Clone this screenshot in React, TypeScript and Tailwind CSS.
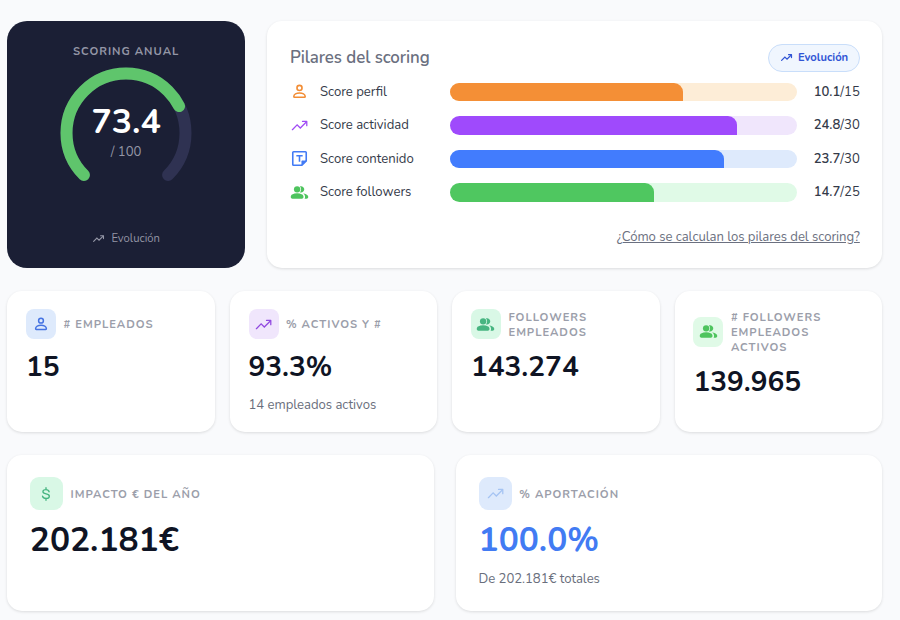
import React from 'react';
import clsx from 'clsx';

interface IconProps {
  className?: string;
}

const PersonIcon: React.FC<IconProps> = ({ className }) => (
  <svg viewBox="0 0 24 24" fill="none" stroke="currentColor" strokeWidth="2" className={className}>
    <circle cx="12" cy="7.500" r="3.200" />
    <path d="M4.800 18.400c0-2.900 3.500-4.600 7.200-4.600s7.200 1.700 7.200 4.600q0 .9-.9.900H5.700q-.9 0-.9-.9z" strokeLinejoin="round" />
  </svg>
);

const TrendIcon: React.FC<IconProps & { strokeWidth?: number }> = ({ className, strokeWidth = 1.6 }) => (
  <svg viewBox="0 0 24 24" fill="none" stroke="currentColor" strokeWidth={strokeWidth} className={className}>
    <path d="M3 17.300l6-6.100 4 4 7.600-7.700" strokeLinecap="round" />
    <path d="M15.800 6.800h5.400v5.400" strokeLinecap="round" strokeLinejoin="round" />
  </svg>
);

const NoteIcon: React.FC<IconProps> = ({ className }) => (
  <svg viewBox="0 0 24 24" fill="none" stroke="currentColor" strokeWidth="2" className={className}>
    <path d="M4.500 3.500h15a1 1 0 0 1 1 1V15l-5.500 5.500H4.500a1 1 0 0 1-1-1v-15a1 1 0 0 1 1-1z" strokeLinejoin="round" />
    <path d="M20.500 15H15v5.500z" fill="currentColor" strokeWidth="1" />
    <path d="M8 8.600h8M12 8.600V16" />
  </svg>
);

const GroupIcon: React.FC<IconProps> = ({ className }) => (
  <svg viewBox="0 0 24 24" fill="currentColor" className={className}>
    <circle cx="9" cy="8" r="4" />
    <path d="M1 17.200q0-.85.440-1.560t1.160-1.090Q5.700 13 9 13t6.400 1.550q.72.380 1.160 1.090T17 17.200V18q0 .82-.59 1.410T15 20H3q-.82 0-1.410-.59T1 18z" />
    <path d="M12.500 11.900Q14 10.200 14 8t-1.500-3.900Q13.200 4 13.900 4q1.700.2 2.900 1.300T18 8t-1.200 2.800-2.800 1.200q-.8 0-1.500-.1z" />
    <path d="M16.600 13.150q2.400.3 4.200 1.300Q23 15.500 23 17v1q0 .82-.59 1.410T21 20h-2.600q.6-.9.600-2v-1q0-2.400-2.400-3.850z" />
  </svg>
);

const DollarIcon: React.FC<IconProps> = ({ className }) => (
  <svg viewBox="0 0 24 24" fill="none" stroke="currentColor" strokeWidth="2" strokeLinecap="round" className={className}>
    <path d="M12 2.500v3M12 18.500v3M16.700 8.600C16.200 6.700 14.500 5.500 12 5.500c-2.700 0-4.600 1.200-4.600 3.200 0 4.600 9.600 1.900 9.600 6.500 0 2.100-2 3.400-4.900 3.400-2.700 0-4.700-1.200-5.300-3.300" />
  </svg>
);

const pillars = [
  { label: 'Score perfil', value: 10.1, max: 15, Icon: PersonIcon, color: 'text-[#f28d35]', fill: 'bg-[#f48f36]', track: 'bg-[#fdedd7]' },
  { label: 'Score actividad', value: 24.8, max: 30, Icon: TrendIcon, color: 'text-[#a04bf5]', fill: 'bg-[#9f4afc]', track: 'bg-[#f0e6fc]' },
  { label: 'Score contenido', value: 23.7, max: 30, Icon: NoteIcon, color: 'text-[#427bf5]', fill: 'bg-[#427cfd]', track: 'bg-[#deeafc]' },
  { label: 'Score followers', value: 14.7, max: 25, Icon: GroupIcon, color: 'text-[#4ec45e]', fill: 'bg-[#4fc760]', track: 'bg-[#e0fae7]' },
];

const ScoreGauge: React.FC = () => (
  <div className="grid h-[132px] w-[132px] place-items-center">
    <svg viewBox="0 0 132 132" fill="none" strokeWidth="12" strokeLinecap="round" className="col-start-1 row-start-1 h-[132px] w-[132px]">
      <path d="M23.930 108.070A59.500 59.500 0 1 1 108.070 108.070" stroke="#2f3252" />
      <path d="M23.930 108.070A59.500 59.500 0 1 1 108.070 108.070" stroke="#5fc56c" pathLength={100} strokeDasharray="73.4 200" />
    </svg>
    <div className="col-start-1 row-start-1 flex flex-col items-center pb-[1px]">
      <span className="text-[33.75px] font-bold leading-[39px] text-white">73.4</span>
      <span className="text-[13.125px] leading-[20px] text-[#9496a6]">/ 100</span>
    </div>
  </div>
);

interface StatProps {
  label: string;
  value: string;
  note?: string;
  icon: React.ReactNode;
  iconClass: string;
}

const StatCard: React.FC<StatProps> = ({ label, value, note, icon, iconClass }) => (
  <div className="rounded-[15px] bg-white px-[18.75px] pt-[18px] shadow-[0_1px_3px_rgba(0,0,0,0.12)]">
    <div className="flex min-h-[31px] items-center gap-[7.500px]">
      <div className={clsx('flex h-[30px] w-[30px] shrink-0 items-center justify-center rounded-[8px]', iconClass)}>
        {icon}
      </div>
      <span className="pt-[1px] text-[11.25px] font-bold uppercase leading-[15px] tracking-[0.97px] text-[#9b9eaa]">{label}</span>
    </div>
    <div className="mt-[9.500px] text-[28px] font-bold leading-[36px] text-[#0f1424]">{value}</div>
    {note && <div className="mt-[9.500px] text-[13.125px] leading-[20px] tracking-[-0.03px] text-[#696e7c]">{note}</div>}
  </div>
);

const WideCard: React.FC<StatProps & { valueClass: string }> = ({ label, value, note, icon, iconClass, valueClass }) => (
  <div className="rounded-[15px] bg-white px-[22.500px] pt-[22.300px] shadow-[0_1px_3px_rgba(0,0,0,0.12)]">
    <div className="flex items-center gap-[7.500px]">
      <div className={clsx('flex h-[33.300px] w-[33.300px] shrink-0 items-center justify-center rounded-[9px]', iconClass)}>
        {icon}
      </div>
      <span className="pt-[1px] text-[11.25px] font-bold uppercase leading-[15px] tracking-[0.97px] text-[#9b9eaa]">{label}</span>
    </div>
    <div className={clsx('mt-[8px] text-[33.500px] font-bold leading-[44px]', valueClass)}>{value}</div>
    {note && <div className="mt-[7px] text-[13.125px] leading-[20px] tracking-[-0.03px] text-[#696e7c]">{note}</div>}
  </div>
);

export default function App() {
  return (
    <div className="flex h-[620px] w-[900px] flex-col gap-[22.500px] overflow-hidden bg-[#f9fafc] pl-[7.300px] pr-[17.700px] pt-[21.300px] font-['Nunito','Lato',sans-serif]">
      <section className="flex h-[247px] shrink-0 gap-[22.400px]">
        <div className="flex w-[237.700px] shrink-0 flex-col items-center rounded-[20px] bg-[#1b1f35] pt-[20.700px]">
          <h2 className="mb-[5px] text-[11.25px] font-bold leading-[20px] tracking-[0.97px] text-[#9496a6]">SCORING ANUAL</h2>
          <ScoreGauge />
          <button className="mt-[31px] flex items-center gap-[6px] text-[11.25px] leading-[18px] text-[#9496a6]">
            <TrendIcon className="h-[13px] w-[13px]" strokeWidth={2} />
            Evolución
          </button>
        </div>

        <div className="flex flex-1 flex-col rounded-[15px] bg-white px-[22.500px] pt-[22.300px] shadow-[0_1px_3px_rgba(0,0,0,0.12)]">
          <div className="flex h-[28px] items-center justify-between">
            <h2 className="text-[16.875px] font-semibold tracking-[-0.07px] text-[#6b7080]">Pilares del scoring</h2>
            <button className="flex h-[28px] w-[91.500px] items-center justify-center gap-[5px] rounded-full border border-[#c9defa] bg-[#f0f6fe] text-[11.25px] font-bold text-[#3155d5]">
              <TrendIcon className="h-[13px] w-[13px]" strokeWidth={2.3} />
              <span className="pt-[1px]">Evolución</span>
            </button>
          </div>
          <div className="mt-[3.500px] flex flex-col">
            {pillars.map(({ label, value, max, Icon, color, fill, track }) => (
              <div key={label} className="flex h-[33.500px] items-center">
                <Icon className={clsx('h-[19px] w-[19px]', color)} />
                <span className="ml-[11px] w-[130.200px] pt-[1.500px] text-[13.125px] text-[#343a49]">{label}</span>
                <div className={clsx('h-[18.500px] w-[346.700px] overflow-hidden rounded-full', track)}>
                  <div className={clsx('h-full rounded-tr-[9px]', fill)} style={{ width: `${(value / max) * 100}%` }} />
                </div>
                <span className="flex-1 pt-[1.500px] text-right text-[13.125px] text-[#343a49]">
                  <b className="font-semibold">{value}</b>/{max}
                </span>
              </div>
            ))}
          </div>
          <a className="mt-[18px] self-end text-[13.125px] leading-[20px] tracking-[-0.04px] text-[#6b7080] underline">¿Cómo se calculan los pilares del scoring?</a>
        </div>
      </section>

      <section className="grid h-[141.500px] shrink-0 grid-cols-4 gap-[14.800px]">
        <StatCard label="# Empleados" value="15" icon={<PersonIcon className="h-[18px] w-[18px]" />} iconClass="bg-[#deeafc] text-[#4573e2]" />
        <StatCard label="% Activos y #" value="93.3%" note="14 empleados activos" icon={<TrendIcon className="h-[19px] w-[19px]" />} iconClass="bg-[#f0e6fc] text-[#9149e0]" />
        <StatCard label="Followers Empleados" value="143.274" icon={<GroupIcon className="h-[19px] w-[19px]" />} iconClass="bg-[#d9f8e6] text-[#47b581]" />
        <StatCard label="# Followers Empleados Activos" value="139.965" icon={<GroupIcon className="h-[19px] w-[19px]" />} iconClass="bg-[#e0fae7] text-[#4ec45e]" />
      </section>

      <section className="grid h-[156px] shrink-0 grid-cols-2 gap-[22.500px]">
        <WideCard label="Impacto € del año" value="202.181€" icon={<DollarIcon className="h-[16px] w-[16px]" />} iconClass="bg-[#d9f8e6] text-[#47b581]" valueClass="text-[#0f1424]" />
        <WideCard label="% Aportación" value="100.0%" note="De 202.181€ totales" icon={<TrendIcon className="h-[19px] w-[19px]" />} iconClass="bg-[#deeafc] text-[#a5c4f3]" valueClass="text-[#427bf3]" />
      </section>
    </div>
  );
}
